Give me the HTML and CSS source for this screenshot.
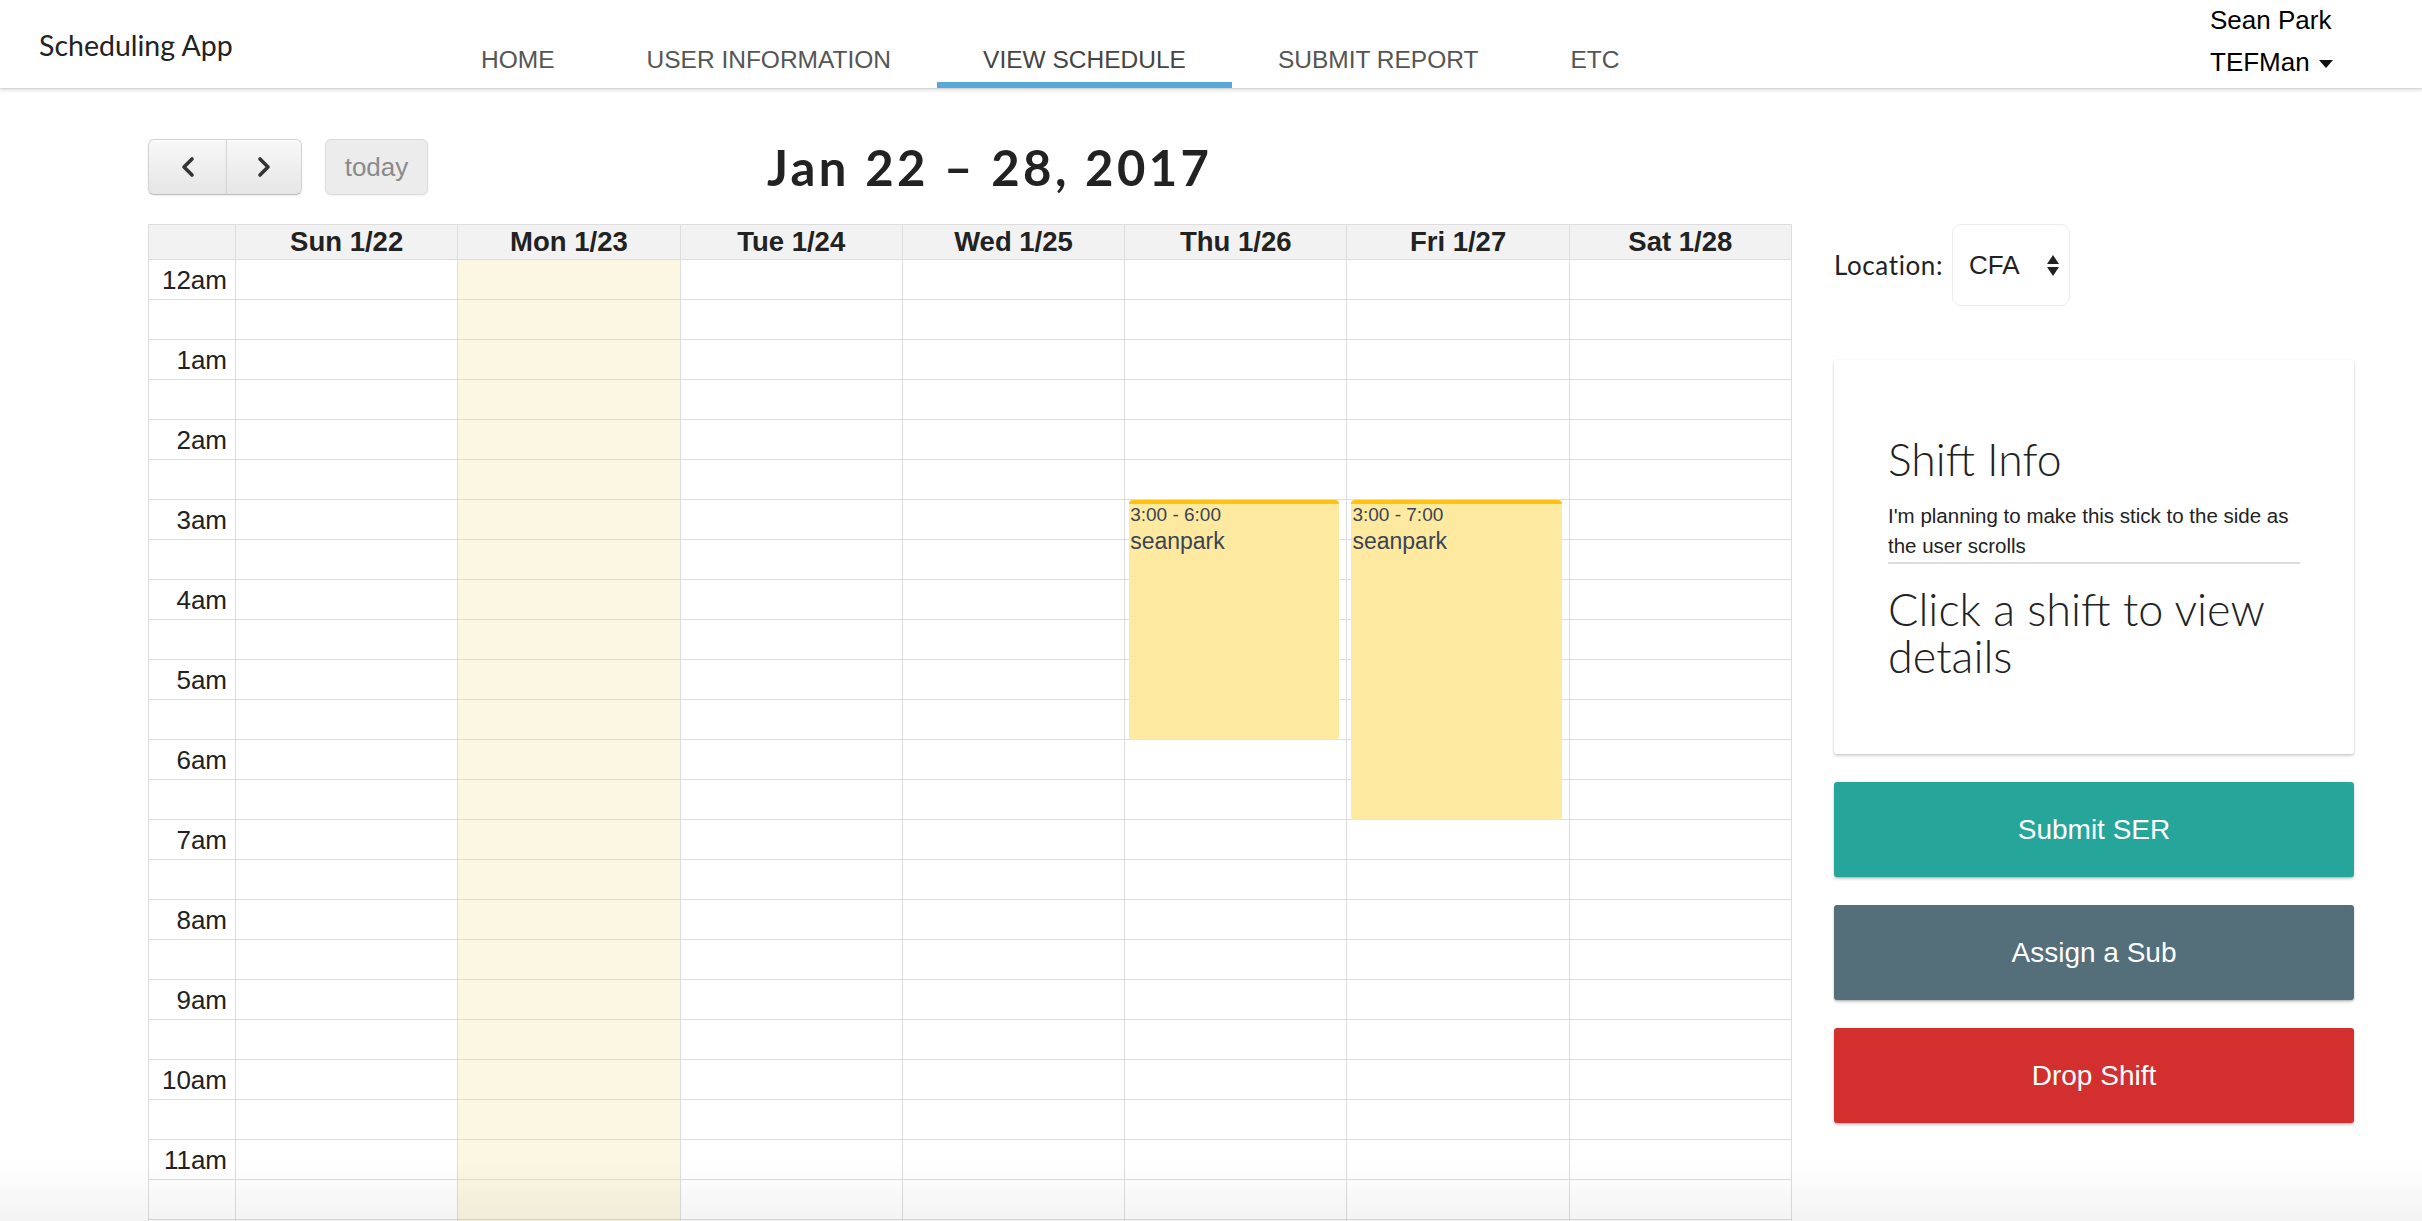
FILE: index.html
```html
<!DOCTYPE html>
<html>
<head>
<meta charset="utf-8">
<title>Scheduling App</title>
<link rel="stylesheet" href="styles.css">
</head>
<body>
<header class="topbar">
  <div class="brand">Scheduling App</div>
  <nav class="nav">
    <a class="nav-item">HOME</a>
    <a class="nav-item">USER INFORMATION</a>
    <a class="nav-item active">VIEW SCHEDULE</a>
    <a class="nav-item">SUBMIT REPORT</a>
    <a class="nav-item">ETC</a>
  </nav>
  <div class="user">
    <div class="user-name">Sean Park</div>
    <div class="user-role">TEFMan <span class="caret"></span></div>
  </div>
</header>

<main class="main">
  <section class="calendar">
    <div class="toolbar">
      <div class="btn-group">
        <button class="btn btn-left"><svg width="14" height="22" viewBox="0 0 14 22"><polyline points="11,3 3,11 11,19" fill="none" stroke="#333" stroke-width="3.6" stroke-linecap="round" stroke-linejoin="round"/></svg></button>
        <button class="btn btn-right"><svg width="14" height="22" viewBox="0 0 14 22"><polyline points="3,3 11,11 3,19" fill="none" stroke="#333" stroke-width="3.6" stroke-linecap="round" stroke-linejoin="round"/></svg></button>
      </div>
      <button class="btn btn-today">today</button>
      <h1 class="cal-title">Jan 22 – 28, 2017</h1>
    </div>

    <div class="cal-grid">
      <div class="cal-head">
        <div class="head-cell axis"></div>
        <div class="head-cell">Sun 1/22</div>
        <div class="head-cell">Mon 1/23</div>
        <div class="head-cell">Tue 1/24</div>
        <div class="head-cell">Wed 1/25</div>
        <div class="head-cell">Thu 1/26</div>
        <div class="head-cell">Fri 1/27</div>
        <div class="head-cell">Sat 1/28</div>
      </div>
      <div class="cal-body">
        <div class="col axis-col"></div>
        <div class="col day-col"></div>
        <div class="col day-col today"></div>
        <div class="col day-col"></div>
        <div class="col day-col"></div>
        <div class="col day-col">
          <div class="event ev-thu">
            <div class="ev-time">3:00 - 6:00</div>
            <div class="ev-title">seanpark</div>
          </div>
        </div>
        <div class="col day-col">
          <div class="event ev-fri">
            <div class="ev-time">3:00 - 7:00</div>
            <div class="ev-title">seanpark</div>
          </div>
        </div>
        <div class="col day-col"></div>
      </div>
    </div>
  </section>

  <aside class="sidebar">
    <div class="location">
      <span class="loc-label">Location:</span>
      <div class="select">
        <span>CFA</span>
        <span class="select-arrows"><span class="tri-up"></span><span class="tri-down"></span></span>
      </div>
    </div>

    <div class="card">
      <h2 class="card-title">Shift Info</h2>
      <p class="card-sub">I'm planning to make this stick to the side as the user scrolls</p>
      <h3 class="card-msg">Click a shift to view details</h3>
    </div>

    <button class="action teal">Submit SER</button>
    <button class="action slate">Assign a Sub</button>
    <button class="action red">Drop Shift</button>
  </aside>
</main>
<div class="bottom-fade"></div>

<script>
  (function () {
    var slots = 25;
    var cols = document.querySelectorAll('.col');
    var labels = ['12am','1am','2am','3am','4am','5am','6am','7am','8am','9am','10am','11am'];
    cols.forEach(function (col, ci) {
      for (var i = 0; i < slots; i++) {
        var s = document.createElement('div');
        s.className = 'slot';
        if (ci === 0 && i % 2 === 0 && labels[i / 2]) s.textContent = labels[i / 2];
        col.appendChild(s);
      }
    });
  })();
</script>
</body>
</html>
```

FILE: styles.css
```css
* { box-sizing: border-box; }
html, body { margin: 0; padding: 0; height: 100%; overflow: hidden; background: #fff; }
body { font-family: "Liberation Sans", Arial, sans-serif; color: #222; }

.topbar {
  height: 88px;
  display: flex;
  align-items: stretch;
  background: #fff;
  box-shadow: 0 2px 4px rgba(0,0,0,0.14), 0 1px 1px rgba(0,0,0,0.06);
  position: relative;
  z-index: 2;
}
.brand {
  font-family: Lato, "Noto Sans", sans-serif;
  font-size: 28.5px;
  color: #222;
  padding-left: 39px;
  padding-top: 28px;
  width: 435px;
}
.nav { display: flex; }
.nav-item {
  display: block;
  padding: 45px 46px 0;
  height: 88px;
  font-size: 24.5px;
  line-height: 30px;
  color: #555;
  border-bottom: 6px solid transparent;
}
.nav-item.active { border-bottom-color: #5aa8d7; color: #444; }
.user {
  margin-left: auto;
  width: 212px;
  padding-top: 4px;
  font-size: 26px;
  color: #000;
}
.user-name { line-height: 32px; }
.user-role { line-height: 32px; margin-top: 10px; }
.caret {
  display: inline-block;
  width: 0; height: 0;
  border-left: 7px solid transparent;
  border-right: 7px solid transparent;
  border-top: 8px solid #111;
  vertical-align: middle;
  margin-left: 2px;
}

.main {
  display: flex;
  padding-left: 148px;
  padding-top: 51px;
  gap: 42px;
}
.calendar { width: 1644px; }
.toolbar {
  display: flex;
  align-items: center;
  height: 56px;
  margin-bottom: 29px;
}
.btn-group { display: flex; }
.btn {
  height: 56px;
  border: 1px solid #d2d2d2;
  border-bottom-color: #bdbdbd;
  background: linear-gradient(#f8f8f8, #e6e6e6);
  box-shadow: inset 0 1px 0 rgba(255,255,255,0.6), 0 1px 2px rgba(0,0,0,0.08);
  display: flex;
  align-items: center;
  justify-content: center;
  padding: 0;
  font-family: inherit;
}
.btn-left { width: 79px; border-radius: 6px 0 0 6px; }
.btn-right { width: 76px; border-radius: 0 6px 6px 0; border-left: 1px solid #d6d6d6; margin-left: -1px; }
.btn-today {
  width: 103px;
  margin-left: 23px;
  border-radius: 6px;
  background: #ececec;
  color: #8a8a8a;
  font-size: 26px;
  box-shadow: 0 1px 2px rgba(0,0,0,0.05);
  border-color: #dadada;
}
.cal-title {
  margin: 0 0 0 339px;
  font-family: Lato, "Noto Sans", sans-serif;
  font-weight: 700;
  font-size: 49px;
  color: #222;
  letter-spacing: 3.4px;
}

.cal-grid { border: 1px solid #ddd; border-bottom: 0; }
.cal-head {
  display: grid;
  grid-template-columns: 86px repeat(7, 1fr);
  background: #f2f2f2;
  border-bottom: 1px solid #ddd;
  height: 35px;
}
.head-cell {
  border-left: 1px solid #ddd;
  text-align: center;
  font-weight: 700;
  font-size: 27.5px;
  line-height: 34px;
  color: #222;
}
.head-cell.axis { border-left: 0; }
.cal-body {
  display: grid;
  grid-template-columns: 86px repeat(7, 1fr);
}
.col { position: relative; border-left: 1px solid #ddd; }
.axis-col { border-left: 0; }
.today { background: #fcf7e3; }
.slot {
  height: 40px;
  border-bottom: 1px solid #ddd;
}
.axis-col .slot {
  text-align: right;
  padding-right: 8px;
  font-size: 26px;
  line-height: 40px;
  color: #222;
}
.event {
  position: absolute;
  left: 4px;
  right: 7px;
  background: #fee9a0;
  border-top: 4px solid #ffc20f;
  border-radius: 4px;
  color: #3a4454;
  padding: 0 1px;
  z-index: 1;
}
.ev-thu { top: 240px; height: 240px; }
.ev-fri { top: 240px; height: 320px; }
.ev-time { font-size: 19px; line-height: 22px; margin-top: 0; }
.ev-title { font-size: 23px; line-height: 30px; }

.sidebar { width: 520px; margin-top: 85px; }
.location {
  display: flex;
  align-items: center;
  height: 82px;
}
.loc-label {
  font-family: Lato, "Noto Sans", sans-serif;
  font-size: 26px;
  letter-spacing: 0.6px;
  color: #222;
  width: 118px;
}
.select {
  width: 118px;
  height: 82px;
  border: 1px solid #ececec;
  border-radius: 9px;
  display: flex;
  align-items: center;
  justify-content: space-between;
  padding: 0 10px 0 16px;
  font-size: 26px;
  color: #222;
}
.select-arrows { display: flex; flex-direction: column; gap: 3px; }
.tri-up, .tri-down {
  width: 0; height: 0;
  border-left: 6px solid transparent;
  border-right: 6px solid transparent;
}
.tri-up { border-bottom: 9px solid #222; }
.tri-down { border-top: 9px solid #222; }

.card {
  margin-top: 54px;
  background: #fff;
  border-radius: 3px;
  box-shadow: 0 2px 3px rgba(0,0,0,0.18), 0 0 2px rgba(0,0,0,0.08);
  padding: 75px 54px 74px;
}
.card-title {
  margin: 0;
  font-family: Lato, "Noto Sans", sans-serif;
  font-weight: 300;
  font-size: 44.5px;
  line-height: 48px;
  color: #222;
}
.card-sub {
  margin: 18px 0 0;
  font-size: 20.5px;
  line-height: 30px;
  color: #222;
  padding-bottom: 1px;
  border-bottom: 2px solid #ddd;
}
.card-msg {
  margin: 22px 0 0;
  font-family: Lato, "Noto Sans", sans-serif;
  font-weight: 300;
  font-size: 45px;
  line-height: 47px;
  color: #222;
}

.action {
  display: block;
  width: 100%;
  height: 95px;
  margin-top: 28px;
  border: 0;
  border-radius: 3px;
  color: #fff;
  font-family: "Liberation Sans", Arial, sans-serif;
  font-size: 28px;
  box-shadow: 0 2px 3px rgba(0,0,0,0.2), 0 1px 1px rgba(0,0,0,0.1);
}
.teal { background: #26a69a; }
.slate { background: #546e7a; }
.red { background: #d32f2f; }

.bottom-fade {
  position: fixed;
  left: 0; right: 0; bottom: 0;
  height: 60px;
  background: linear-gradient(rgba(0,0,0,0), rgba(0,0,0,0.045));
  pointer-events: none;
  z-index: 3;
}
```
